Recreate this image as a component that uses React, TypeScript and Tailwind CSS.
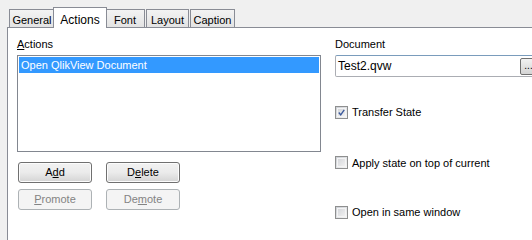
import React from "react";

const font = { fontFamily: '"Liberation Sans", Arial, sans-serif' };

function Tab({ label, active, w }: { label: string; active?: boolean; w: string }) {
  if (active) {
    return (
      <div
        className={`relative z-10 -mx-[2px] -mb-px flex h-[21px] items-start justify-center border border-b-0 border-[#898c95] bg-white pt-[3px] text-[12px] text-black ${w}`}
      >
        {label}
      </div>
    );
  }
  return (
    <div
      className={`mt-[2px] flex h-[18px] items-start justify-center border border-b-0 border-[#898c95] bg-gradient-to-b from-[#f3f3f3] to-[#e3e3e3] pt-[2px] text-[11px] text-black ${w}`}
    >
      {label}
    </div>
  );
}

function Button({ children, disabled }: { children: React.ReactNode; disabled?: boolean }) {
  if (disabled) {
    return (
      <div className="flex h-[21px] w-[74px] items-center justify-center rounded-[3px] border border-[#adb2b5] bg-[#f4f4f4] text-[11px] text-[#838383]">
        {children}
      </div>
    );
  }
  return (
    <div className="flex h-[21px] w-[74px] items-center justify-center rounded-[3px] border border-[#707070] bg-gradient-to-b from-[#f2f2f2] via-[#ebebeb] to-[#d4d4d4] text-[11px] text-black shadow-[inset_0_0_0_1px_#fcfcfc]">
      {children}
    </div>
  );
}

function Check({ label, checked }: { label: string; checked?: boolean }) {
  return (
    <div className="flex items-center gap-[4px] text-[11px] text-black">
      <div className="flex h-[13px] w-[13px] items-center justify-center border border-[#8e8f8f] bg-gradient-to-br from-[#cbcfd5] to-[#f6f6f6] p-px">
        <div className="flex h-full w-full items-center justify-center border border-[#f4f4f4] bg-gradient-to-br from-[#d5d7db] to-[#f0f0f0]">
          {checked && (
            <svg width="9" height="9" viewBox="0 0 9 9">
              <path d="M1 4.5 L3.5 7.5 L8 1" fill="none" stroke="#3c5a9c" strokeWidth="1.8" />
            </svg>
          )}
        </div>
      </div>
      <span>{label}</span>
    </div>
  );
}

export default function App() {
  return (
    <div className="h-[240px] w-[532px] overflow-hidden bg-[#f0f0f0] pl-[7px]" style={font}>
      {/* Tabs */}
      <div className="flex h-[27px] items-end pl-[2px] pt-[7px]">
        <Tab label="General" w="w-[46px]" />
        <Tab label="Actions" active w="w-[54px]" />
        <Tab label="Font" w="w-[40px]" />
        <div className="w-px" />
        <Tab label="Layout" w="w-[43px]" />
        <div className="w-px" />
        <Tab label="Caption" w="w-[45px]" />
      </div>

      {/* Panel */}
      <div className="flex h-[220px] border-l border-t border-[#898c95] bg-white pl-[9px] pt-[8px]">
        {/* Left column */}
        <div className="flex w-[304px] shrink-0 flex-col">
          <div className="h-[14px] text-[11px] text-black">
            <span className="underline underline-offset-1">A</span>ctions
          </div>
          <div className="mt-[5px] h-[97px] border border-[#828790] p-px">
            <div className="flex h-[16px] items-center bg-[#3399ff] pl-[2px] text-[11px] text-white">
              Open QlikView Document
            </div>
          </div>
          <div className="mt-[10px] flex gap-[14px] pl-px">
            <Button>
              A<span className="underline underline-offset-1">d</span>d
            </Button>
            <Button>
              D<span className="underline underline-offset-1">e</span>lete
            </Button>
          </div>
          <div className="mt-[6px] flex gap-[14px] pl-px">
            <Button disabled>
              <span className="underline underline-offset-1">P</span>romote
            </Button>
            <Button disabled>
              De<span className="underline underline-offset-1">m</span>ote
            </Button>
          </div>
        </div>

        {/* Right column */}
        <div className="ml-[14px] flex w-[204px] shrink-0 flex-col">
          <div className="h-[14px] text-[11px] text-black">Document</div>
          <div className="mt-[5px] flex h-[22px] items-center rounded-[2px] border border-[#abadb3] border-t-[#7a9cbc] bg-white pl-[2px] pr-[1px]">
            <span className="flex-1 text-[12px] text-black">Test2.qvw</span>
            <div className="flex h-[17px] w-[17px] items-end justify-center rounded-[2px] border border-[#707070] bg-gradient-to-b from-[#f2f2f2] to-[#d4d4d4] pb-[3px] text-[10px] leading-none text-black">
              ...
            </div>
          </div>
          <div className="mt-[27px]">
            <Check label="Transfer State" checked />
          </div>
          <div className="mt-[34px]">
            <Check label="Apply state on top of current" />
          </div>
          <div className="mt-[33px]">
            <Check label="Open in same window" />
          </div>
        </div>
      </div>
    </div>
  );
}
